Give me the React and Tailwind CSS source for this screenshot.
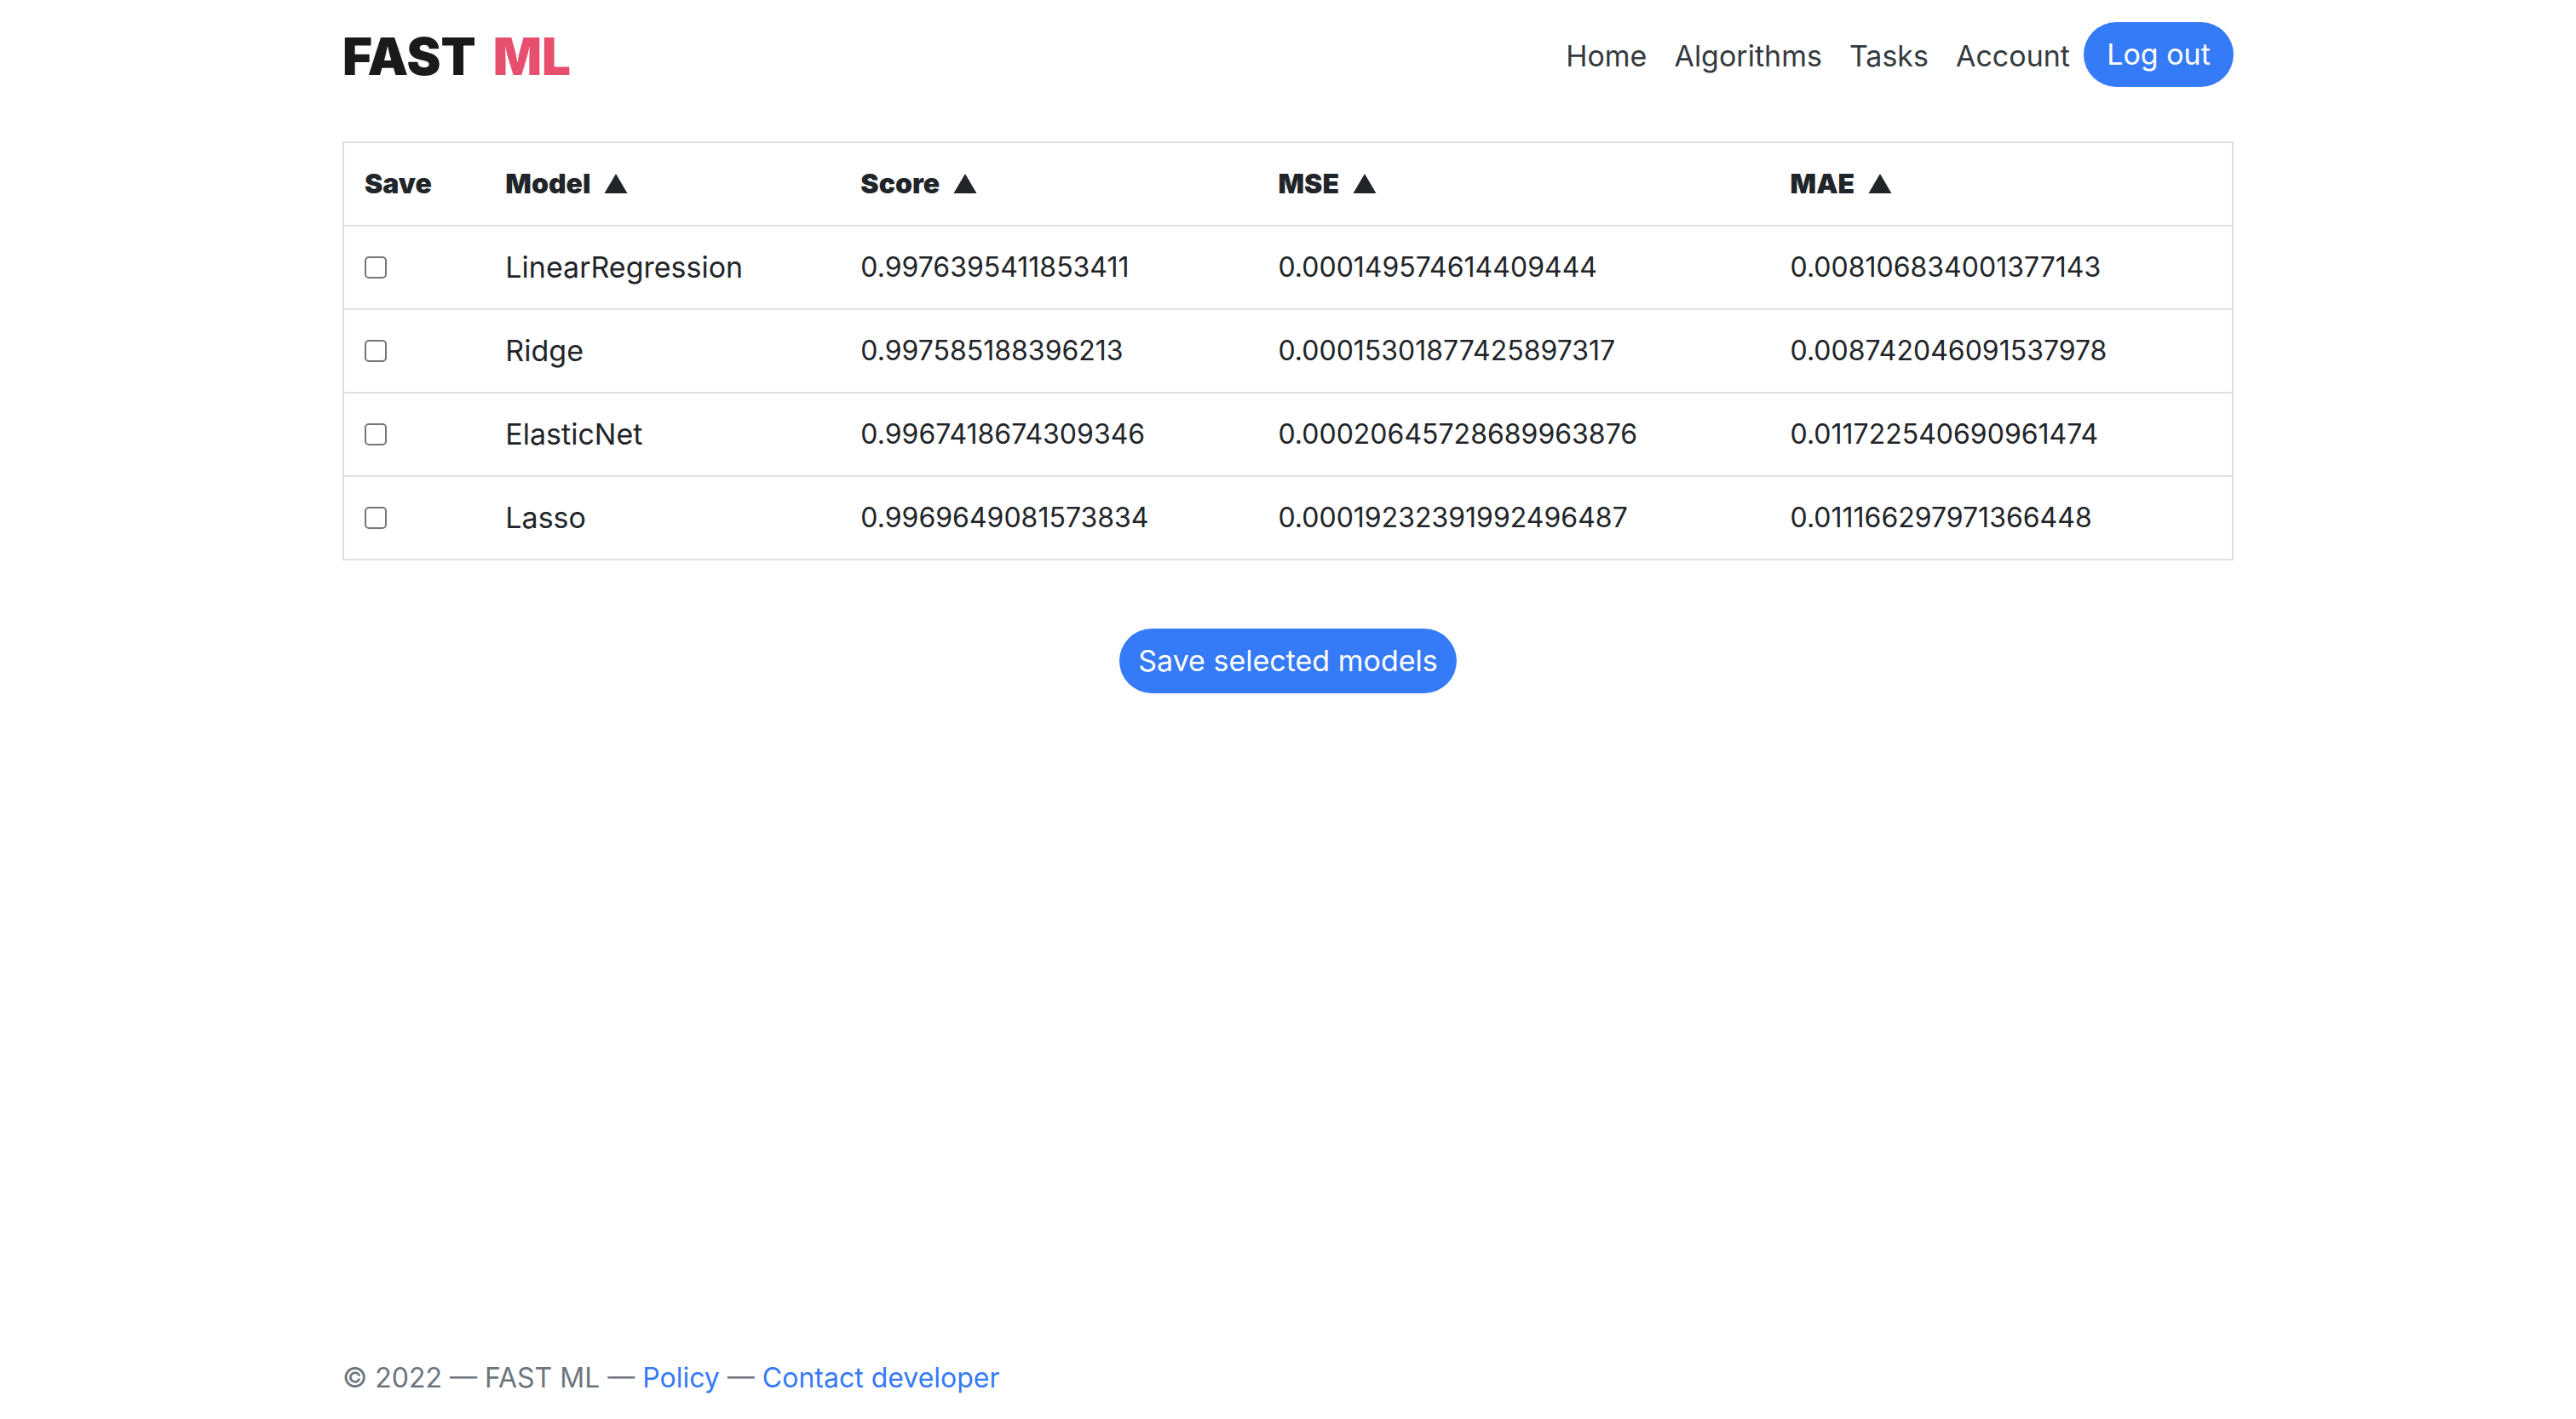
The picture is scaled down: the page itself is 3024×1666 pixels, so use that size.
const columns = [
  { label: 'Save', sortable: false },
  { label: 'Model', sortable: true },
  { label: 'Score', sortable: true },
  { label: 'MSE', sortable: true },
  { label: 'MAE', sortable: true },
];

const models = [
  { name: 'LinearRegression', score: '0.9976395411853411', mse: '0.000149574614409444', mae: '0.008106834001377143' },
  { name: 'Ridge', score: '0.997585188396213', mse: '0.00015301877425897317', mae: '0.008742046091537978' },
  { name: 'ElasticNet', score: '0.9967418674309346', mse: '0.00020645728689963876', mae: '0.011722540690961474' },
  { name: 'Lasso', score: '0.9969649081573834', mse: '0.00019232391992496487', mae: '0.011166297971366448' },
];

const links = ['Home', 'Algorithms', 'Tasks', 'Account'];

function Header() {
  return (
    <header className="flex items-start justify-between pt-[26px]">
      <a href="#home" className="flex gap-5 text-[60px] leading-[80px] font-black text-[#1a1a1a]">
        <span>FAST</span>
        <span className="text-[#e6506e]">ML</span>
      </a>
      <nav className="flex items-center gap-4 text-[34px]">
        <ul className="flex gap-8 pt-1">
          {links.map((link) => (
            <li key={link}>
              <a href={'#' + link.toLowerCase()} className="text-[#343a40]">{link}</a>
            </li>
          ))}
        </ul>
        <button type="button" className="h-[76px] w-[176px] rounded-full bg-[#357af6] text-white">Log out</button>
      </nav>
    </header>
  );
}

function ResultsTable() {
  return (
    <table className="mt-[60px] w-full table-fixed border-collapse border-2 border-[#dedfe0] text-left">
      <colgroup>
        <col className="w-[7.5%]" />
        <col className="w-[18.8%]" />
        <col className="w-[22.1%]" />
        <col className="w-[27.1%]" />
        <col />
      </colgroup>
      <thead>
        <tr className="border-b-2 border-[#dee2e6]">
          {columns.map(({ label, sortable }) => (
            <th key={label} scope="col" className="px-6 py-6 font-black">
              {sortable ? (
                <button type="button" className="flex items-center gap-4">
                  {label}
                  <svg className="h-6 w-7" viewBox="0 0 28 24" fill="currentColor" aria-hidden="true">
                    <path d="M14 0 27.5 23H.5Z" />
                  </svg>
                </button>
              ) : label}
            </th>
          ))}
        </tr>
      </thead>
      <tbody>
        {models.map((m) => (
          <tr key={m.name} className="border-b-2 border-[#dee2e6]">
            <td className="px-6 py-6">
              <input
                type="checkbox"
                aria-label={'Save ' + m.name}
                className="block size-[26px] appearance-none rounded-[5px] border-2 border-[#767676] bg-white checked:bg-[#357af6]"
              />
            </td>
            <td className="px-6 py-6 text-[34px]">{m.name}</td>
            <td className="px-6 py-6">{m.score}</td>
            <td className="px-6 py-6">{m.mse}</td>
            <td className="px-6 py-6">{m.mae}</td>
          </tr>
        ))}
      </tbody>
    </table>
  );
}

export default function App() {
  return (
    <div className="min-h-screen bg-white px-8 font-['Inter',sans-serif] text-[32px] leading-[48px] text-[#212529]">
      <div className="mx-auto flex min-h-screen max-w-[2220px] flex-col">
        <Header />
        <main className="flex flex-1 flex-col items-center">
          <ResultsTable />
          <button type="button" className="mt-20 h-[76px] w-[396px] rounded-full bg-[#357af6] text-[34px] text-white">
            Save selected models
          </button>
        </main>
        <footer className="pb-6 text-[#6c757d]">
          © 2022 — FAST ML — <a href="#policy" className="text-[#357af6]">Policy</a> —{' '}
          <a href="#contact" className="text-[#357af6]">Contact developer</a>
        </footer>
      </div>
    </div>
  );
}
